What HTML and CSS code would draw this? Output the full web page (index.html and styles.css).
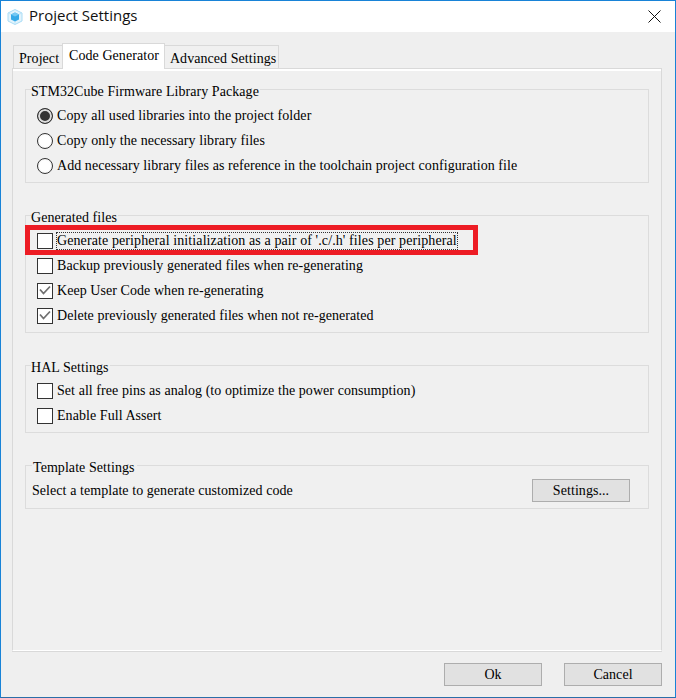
FILE: index.html
```html
<!DOCTYPE html>
<html lang="en">
<head>
    <meta charset="UTF-8">
    <title>Project Settings</title>
    <link rel="stylesheet" href="styles.css">
</head>
<body>
    <div class="window">
        <div class="titlebar">
            <svg class="app-icon" width="16" height="16" viewBox="0 0 16 16">
                <path d="M8 0.5 L15 4 V12 L8 15.5 L1 12 V4 Z" fill="#e2f3fc" stroke="#a9dcf6" stroke-width="1"/>
                <path d="M1 4 L8 7 L15 4 M8 7 V15.5" fill="none" stroke="#bfe5f9" stroke-width="1"/>
                <path d="M8 3.5 L12 5.5 V10.5 L8 12.5 L4 10.5 V5.5 Z" fill="#35a9e8"/>
                <path d="M8 3.5 L12 5.5 L8 7.5 L4 5.5 Z" fill="#74c8f3"/>
            </svg>
            <span class="title">Project Settings</span>
            <svg class="close-icon" width="13" height="13" viewBox="0 0 13 13">
                <path d="M0.5 0.5 L12.5 12.5 M12.5 0.5 L0.5 12.5" stroke="#111" stroke-width="1" fill="none"/>
            </svg>
        </div>
        <div class="content">
            <div class="tabs">
                <div class="tab">Project</div>
                <div class="tab active">Code Generator</div>
                <div class="tab">Advanced Settings</div>
            </div>
            <div class="panel">
                <fieldset class="group group-library">
                    <legend>STM32Cube Firmware Library Package</legend>
                    <div class="row"><span class="radio checked"></span><span class="label">Copy all used libraries into the project folder</span></div>
                    <div class="row"><span class="radio"></span><span class="label">Copy only the necessary library files</span></div>
                    <div class="row"><span class="radio"></span><span class="label">Add necessary library files as reference in the toolchain project configuration file</span></div>
                </fieldset>
                <fieldset class="group group-files">
                    <legend>Generated files</legend>
                    <div class="row highlighted"><span class="check"></span><span class="label focused">Generate peripheral initialization as a pair of '.c/.h' files per peripheral</span></div>
                    <div class="row"><span class="check"></span><span class="label">Backup previously generated files when re-generating</span></div>
                    <div class="row"><span class="check"><svg width="14" height="14" viewBox="0 0 14 14"><path d="M2 5.5 L5.5 9.5 L12 2.5" stroke="#707070" stroke-width="1.8" fill="none"/></svg></span><span class="label">Keep User Code when re-generating</span></div>
                    <div class="row"><span class="check"><svg width="14" height="14" viewBox="0 0 14 14"><path d="M2 5.5 L5.5 9.5 L12 2.5" stroke="#707070" stroke-width="1.8" fill="none"/></svg></span><span class="label">Delete previously generated files when not re-generated</span></div>
                </fieldset>
                <fieldset class="group group-hal">
                    <legend>HAL Settings</legend>
                    <div class="row"><span class="check"></span><span class="label">Set all free pins as analog (to optimize the power consumption)</span></div>
                    <div class="row"><span class="check"></span><span class="label">Enable Full Assert</span></div>
                </fieldset>
                <fieldset class="group group-template">
                    <legend>Template Settings</legend>
                    <div class="template-row">
                        <span>Select a template to generate customized code</span>
                        <button class="btn">Settings...</button>
                    </div>
                </fieldset>
            </div>
            <div class="actions">
                <button class="btn">Ok</button>
                <button class="btn">Cancel</button>
            </div>
        </div>
    </div>
</body>
</html>
```

FILE: styles.css
```css
html, body {
    margin: 0;
    padding: 0;
}
body {
    font-family: "Liberation Serif", "DejaVu Serif", serif;
    font-size: 14px;
    letter-spacing: 0.06px;
    color: #000;
    background: #f0f0f0;
}
.window {
    width: 676px;
    height: 698px;
    box-sizing: border-box;
    border: 1px solid #1883d7;
    border-bottom-color: #2a6ea8;
    display: flex;
    flex-direction: column;
    overflow: hidden;
}
.titlebar {
    height: 31px;
    flex: none;
    background: #fff;
    display: flex;
    align-items: center;
    padding: 0 14px 0 6px;
}
.title {
    font-family: "Open Sans", "Noto Sans", sans-serif;
    font-size: 15px;
    letter-spacing: 0;
    color: #111;
    margin: 0 0 3px 6px;
    flex: 1;
}
.content {
    flex: 1;
    background: #efefef;
    padding: 11px 13px 0 11px;
    display: flex;
    flex-direction: column;
}
.tabs {
    display: flex;
    align-items: flex-end;
    height: 25px;
    padding-left: 2px;
}
.tab {
    height: 23px;
    box-sizing: border-box;
    border: 1px solid #d9d9d9;
    border-bottom: none;
    line-height: 26px;
    padding: 0 2px 0 5px;
    background: #f0f0f0;
    margin-left: -1px;
}
.tab:first-child {
    padding-right: 3px;
}
.tab.active {
    height: 26px;
    background: #fff;
    line-height: 24px;
    padding: 0 5px 0 6px;
    margin-bottom: -1px;
    position: relative;
    z-index: 1;
}
.panel {
    height: 583px;
    box-sizing: border-box;
    border: 1px solid #d9d9d9;
    border-bottom-color: #fff;
    padding: 0 12px;
    background: #f0f0f0;
    display: flex;
    flex-direction: column;
    box-shadow: inset 0 2px 0 #fff, 0 1px 0 #d9d9d9;
}
.group {
    margin: 0;
    min-width: 0;
    border: 1px solid #dcdcdc;
    padding: 2px 0 0 11px;
    box-sizing: border-box;
}
/* top padding pushes the caption below the line, as the native group box does */
.group legend {
    padding: 6px 1px 0 0;
    margin-left: -6px;
    line-height: 16px;
    box-sizing: content-box;
}
.group-library {
    margin-top: 9px;
    height: 105px;
    padding-top: 3px;
}
.group-files {
    margin-top: 21px;
    height: 129px;
}
.group-hal {
    margin-top: 21px;
    height: 79px;
}
.group-template {
    margin-top: 21px;
    height: 55px;
    padding: 2px 18px 0 6px;
}
.group-template legend {
    margin-left: 0;
    padding: 6px 2px 0 1px;
}
.row {
    height: 25px;
    display: flex;
    align-items: center;
    position: relative;
}
.check, .radio {
    width: 16px;
    height: 16px;
    flex: none;
    box-sizing: border-box;
    background: #fff;
    border: 1px solid #333;
    margin-right: 4px;
    display: flex;
    align-items: center;
    justify-content: center;
}
.radio {
    border-radius: 50%;
    box-shadow: inset 0 0 0 1px #f4f4f4;
}
.radio.checked {
    background: #333;
    box-shadow: inset 0 0 0 2px #dcdcdc;
}
.label {
    white-space: nowrap;
    line-height: 16px;
}
.focused {
    letter-spacing: 0.1px;
    outline: 1px dotted #333;
    outline-offset: 0;
}
/* red marker drawn over the first row */
.highlighted::after {
    content: "";
    position: absolute;
    left: -12px;
    top: -3px;
    width: 453px;
    height: 30px;
    box-sizing: border-box;
    border: 5px solid #ed1c24;
    pointer-events: none;
}
.template-row {
    display: flex;
    justify-content: space-between;
    align-items: center;
    height: 25px;
}
.btn {
    width: 98px;
    height: 23px;
    box-sizing: border-box;
    background: #e1e1e1;
    border: 1px solid #adadad;
    border-radius: 0;
    font-family: inherit;
    font-size: 14px;
    letter-spacing: inherit;
    color: #000;
    padding: 0;
}
.actions {
    display: flex;
    justify-content: flex-end;
    gap: 22px;
    margin-top: 12px;
}
```
